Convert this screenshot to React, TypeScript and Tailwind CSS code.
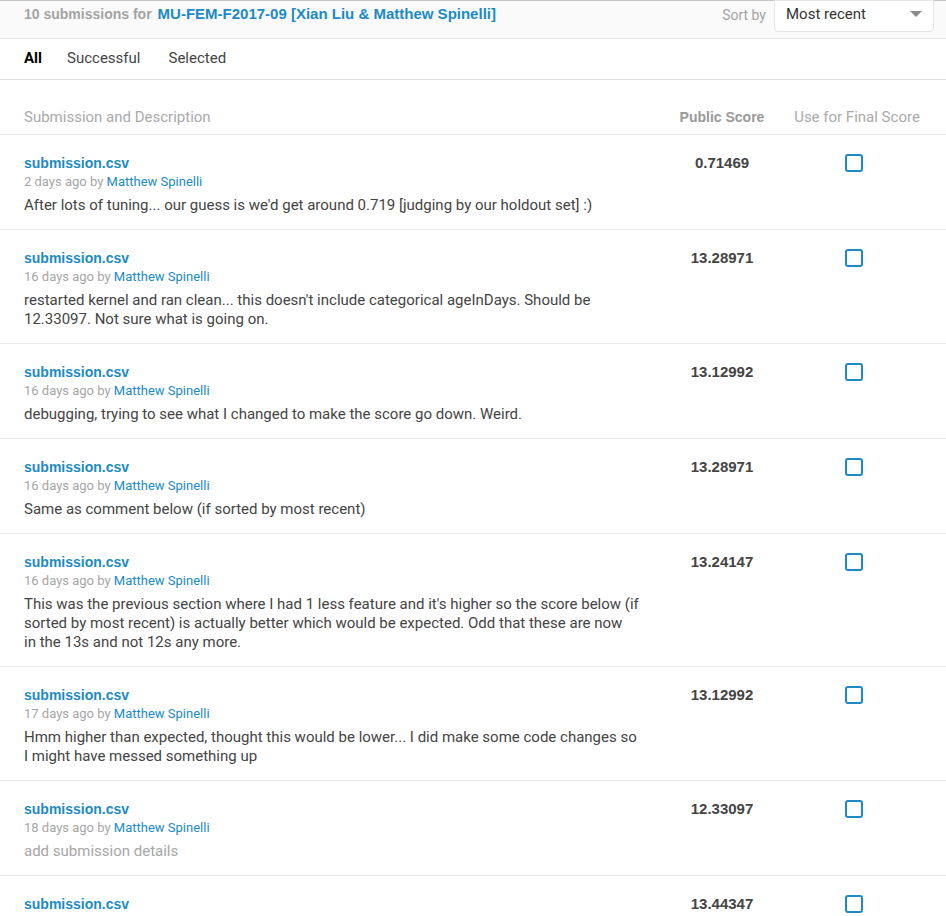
import { useState } from "react";

interface Submission {
  ago: string;
  desc: string[];
  score: string;
  muted?: boolean;
}

const rows: Submission[] = [
  {
    ago: "2 days ago",
    desc: ["After lots of tuning... our guess is we'd get around 0.719 [judging by our holdout set] :)"],
    score: "0.71469",
  },
  {
    ago: "16 days ago",
    desc: [
      "restarted kernel and ran clean... this doesn't include categorical ageInDays. Should be",
      "12.33097. Not sure what is going on.",
    ],
    score: "13.28971",
  },
  {
    ago: "16 days ago",
    desc: ["debugging, trying to see what I changed to make the score go down. Weird."],
    score: "13.12992",
  },
  {
    ago: "16 days ago",
    desc: ["Same as comment below (if sorted by most recent)"],
    score: "13.28971",
  },
  {
    ago: "16 days ago",
    desc: [
      "This was the previous section where I had 1 less feature and it's higher so the score below (if",
      "sorted by most recent) is actually better which would be expected. Odd that these are now",
      "in the 13s and not 12s any more.",
    ],
    score: "13.24147",
  },
  {
    ago: "17 days ago",
    desc: [
      "Hmm higher than expected, thought this would be lower... I did make some code changes so",
      "I might have messed something up",
    ],
    score: "13.12992",
  },
  {
    ago: "18 days ago",
    desc: ["add submission details"],
    score: "12.33097",
    muted: true,
  },
  {
    ago: "19 days ago",
    desc: ["add submission details"],
    score: "13.44347",
    muted: true,
  },
];

const arial = "font-['Liberation_Sans',Arial,sans-serif]";
const body = "font-['Roboto','Liberation_Sans',sans-serif]";

const Row = ({ item }: { item: Submission }) => {
  const [checked, setChecked] = useState(false);
  return (
    <div className="grid grid-cols-[654px_136px_134px] border-b border-[#ebebeb] pt-[19px] pb-[14px]">
      <div className="pl-6">
        <div className={`${arial} text-[14px] leading-[18px] font-bold text-[#1c8ac4]`}>
          submission.csv
        </div>
        <div className={`${body} text-[13px] leading-[19px] text-[#a6a6a6]`}>
          {item.ago} by <span className="text-[#1c8ac4]">Matthew Spinelli</span>
        </div>
        <div
          className={`${body} mt-[5px] text-[15px] leading-[19px] whitespace-nowrap ${
            item.muted ? "text-[#a6a6a6]" : "text-[#444]"
          }`}
        >
          {item.desc.map((line, i) => (
            <div key={i}>{line}</div>
          ))}
        </div>
      </div>
      <div className={`${arial} text-center text-[15px] leading-[18px] font-bold text-[#444]`}>
        {item.score}
      </div>
      <div className="flex justify-center pr-[7px]">
        <button
          onClick={() => setChecked(!checked)}
          className="w-[18px] h-[18px] rounded-[3px] border-2 border-[#1c8ac4] bg-white"
          aria-checked={checked}
        />
      </div>
    </div>
  );
};

export default function App() {
  return (
    <div className="w-[946px] min-h-screen bg-white text-[#444] overflow-hidden">
      {/* header bar */}
      <div className="flex items-start justify-between h-[39px] border-t border-[#c4c4c4] border-b border-b-[#e6e6e6] bg-[#fafafa]">
        <div className="pl-6 pt-[4px] leading-[18px] font-bold flex items-baseline">
          <span className={`${arial} text-[14px] text-[#a3a3a3]`}>10 submissions for</span>
          <span className={`${arial} text-[15px] text-[#1c8ac4] ml-[6px]`}>
            MU-FEM-F2017-09 [Xian Liu &amp; Matthew Spinelli]
          </span>
        </div>
        <div className="flex items-start pr-3">
          <span className={`${body} text-[14px] text-[#a3a3a3] pt-[4px] mr-[8px]`}>Sort by</span>
          <div className="w-[160px] h-[32px] -mt-px bg-white border border-[#e6e6e6] rounded-b-[4px] flex items-center justify-between pl-[11px] pr-[11px]">
            <span className={`${body} text-[15px] text-[#333] -mt-[3px]`}>Most recent</span>
            <svg width="12" height="7" viewBox="0 0 12 7" className="-mt-[4px]">
              <path d="M0 0 L12 0 L6 6 Z" fill="#8a8a8a" />
            </svg>
          </div>
        </div>
      </div>

      {/* tabs */}
      <div className={`${body} flex items-center h-[41px] border-b border-[#e0e0e0] pl-6 pb-[2px] text-[15px]`}>
        <span className="font-bold text-black mr-[25px]">All</span>
        <span className="text-[#444] mr-[28px]">Successful</span>
        <span className="text-[#444]">Selected</span>
      </div>

      {/* table */}
      <div className="mt-[25px]">
        <div className="grid grid-cols-[654px_136px_134px] h-[30px] pt-[3px] border-b border-[#ebebeb] items-start">
          <div className={`${body} pl-6 text-[15px] leading-[18px] text-[#aaa]`}>Submission and Description</div>
          <div className={`${arial} text-center text-[14px] leading-[18px] font-bold text-[#999]`}>Public Score</div>
          <div className={`${body} flex justify-center whitespace-nowrap text-[15px] leading-[18px] text-[#aaa]`}>
            Use for Final Score
          </div>
        </div>
        {rows.map((r, i) => (
          <Row key={i} item={r} />
        ))}
      </div>
    </div>
  );
}
